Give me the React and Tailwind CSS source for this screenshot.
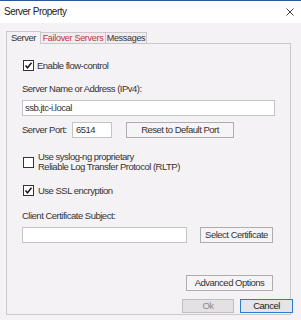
function Check({ checked }) {
  return (
    <span className="w-[11px] h-[11px] border border-[#333] bg-white flex items-center justify-center shrink-0">
      {checked && (
        <svg width="9" height="9" viewBox="0 0 9 9">
          <path d="M1.5 4.5 L3.5 6.8 L7.5 1.8" fill="none" stroke="#111" strokeWidth="1.4" />
        </svg>
      )}
    </span>
  );
}

function Btn({ className = "", children }) {
  return (
    <div className={"border border-[#adadad] bg-[#f7f4f7] flex items-center justify-center " + className}>
      {children}
    </div>
  );
}

export default function App() {
  return (
    <div className="w-[301px] h-[320px] bg-[#f5f2f5] overflow-hidden text-[9.5px] tracking-[-0.5px] text-[#333] font-['Liberation_Sans',Arial,sans-serif] leading-[12px]">
      <div className="h-px bg-[#2a579a]" />
      <div className="h-[22px] bg-white flex items-center justify-between pl-[4px] pr-[7px]">
        <span className="text-[10px] text-[#222]">Server Property</span>
        <svg width="8" height="8" viewBox="0 0 8 8">
          <path d="M0.5 0.5L7.5 7.5M7.5 0.5L0.5 7.5" stroke="#444" strokeWidth="1" />
        </svg>
      </div>
      <div className="pl-[6px] pt-[8px]">
        <div className="flex items-end h-[12px] relative z-10">
          <div className="w-[35px] h-[13px] -mb-px border border-b-0 border-[#c9c9c9] bg-[#f5f2f5] flex items-center justify-center">
            Server
          </div>
          <div className="w-[65px] h-[11px] border border-l-0 border-b-0 border-[#c9c9c9] bg-[#f0edf0] flex items-center justify-center text-[#c0303f] text-[9px] tracking-[-0.3px]">
            Failover Servers
          </div>
          <div className="w-[41px] h-[11px] border border-l-0 border-b-0 border-[#c9c9c9] bg-[#f0edf0] flex items-center justify-center text-[9px] tracking-[-0.3px]">
            Messages
          </div>
        </div>
        <div className="w-[285px] h-[272px] border border-[#c9c9c9] pl-[15px] pr-[15px] flex flex-col">
          <div className="mt-[16px] h-[11px] flex items-center gap-[3px] pl-px">
            <Check checked />
            <span>Enable flow-control</span>
          </div>
          <div className="mt-[12px] h-[12px]">Server Name or Address (IPv4):</div>
          <div className="mt-[5px] h-[16px] border border-[#c4c4c4] bg-white flex items-center pl-[2px]">
            ssb.jtc-i.local
          </div>
          <div className="mt-[6px] h-[16px] flex items-center">
            <span className="w-[50px]">Server Port:</span>
            <div className="w-[40px] h-[16px] border border-[#c4c4c4] bg-white flex items-center pl-[3px]">
              6514
            </div>
            <Btn className="ml-[14px] w-[108px] h-[16px]">Reset to Default Port</Btn>
          </div>
          <div className="mt-[14px] h-[20px] flex items-center gap-[3px] pl-px">
            <Check />
            <div className="leading-[10px] pl-px">
              <div>Use syslog-ng proprietary</div>
              <div>Reliable Log Transfer Protocol (RLTP)</div>
            </div>
          </div>
          <div className="mt-[13px] h-[11px] flex items-center gap-[3px] pl-px">
            <Check checked />
            <span className="pl-px">Use SSL encryption</span>
          </div>
          <div className="mt-[14px] h-[12px]">Client Certificate Subject:</div>
          <div className="mt-[5px] h-[16px] flex items-center">
            <div className="w-[165px] h-[16px] border border-[#c4c4c4] bg-white" />
            <Btn className="ml-[13px] w-[73px] h-[16px]">Select Certificate</Btn>
          </div>
          <div className="mt-[32px] flex justify-end pr-[2px]">
            <Btn className="w-[87px] h-[16px]">Advanced Options</Btn>
          </div>
          <div className="mt-[8px] flex justify-end gap-[6px] -mr-[18px]">
            <div className="w-[52px] h-[14px] border border-[#bfbfbf] bg-[#e3e1e3] flex items-center justify-center text-[#8a8a8a]">
              Ok
            </div>
            <div className="w-[53px] h-[14px] border border-[#2f7bd0] bg-[#e6e4e6] flex items-center justify-center text-[#222]">
              Cancel
            </div>
          </div>
        </div>
      </div>
    </div>
  );
}
